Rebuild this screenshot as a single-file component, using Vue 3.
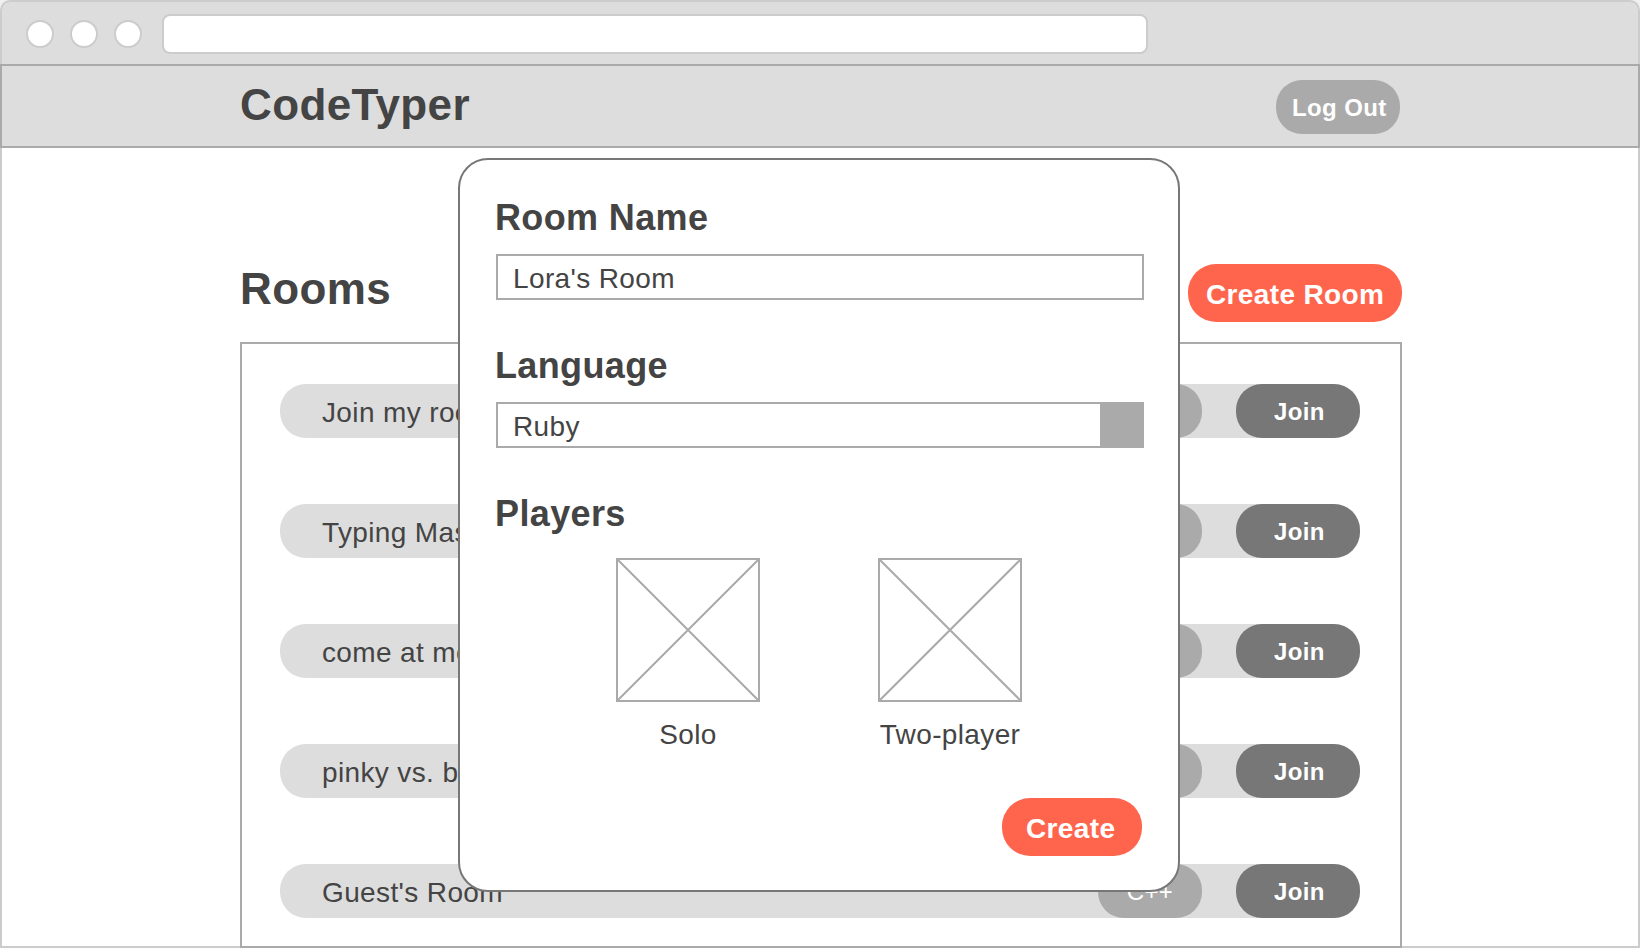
<script setup>
const rooms = [
  { name: 'Join my room', language: 'Ruby' },
  { name: 'Typing Master', language: 'Ruby' },
  { name: 'come at me', language: 'Java' },
  { name: 'pinky vs. brain', language: 'C++' },
  { name: "Guest's Room", language: 'C++' },
]
const modes = ['Solo', 'Two-player']
</script>

<template>
  <div class="window">
    <div class="chrome">
      <span v-for="n in 3" :key="n" class="dot"></span>
      <div class="address"></div>
    </div>

    <header class="header">
      <h1 class="title">CodeTyper</h1>
      <button class="pill logout">Log Out</button>
    </header>

    <main class="main">
      <div class="heading">
        <h2 class="title">Rooms</h2>
        <button class="action create-room">Create Room</button>
      </div>
      <ul class="rooms">
        <li v-for="room in rooms" :key="room.name" class="room">
          <span class="room-name">{{ room.name }}</span>
          <span class="pill language">{{ room.language }}</span>
          <button class="pill join">Join</button>
        </li>
      </ul>
    </main>

    <section class="modal">
      <h3 class="label">Room Name</h3>
      <div class="field">Lora's Room</div>
      <h3 class="label">Language</h3>
      <div class="field select">
        <span>Ruby</span>
        <span class="toggle"></span>
      </div>
      <h3 class="label">Players</h3>
      <div class="modes">
        <div v-for="mode in modes" :key="mode" class="mode">
          <svg class="thumb" width="144" height="144" viewBox="0 0 144 144">
            <rect x="1" y="1" width="142" height="142" />
            <path d="M1 1 143 143M143 1 1 143" />
          </svg>
          <span class="mode-name">{{ mode }}</span>
        </div>
      </div>
      <button class="action create">Create</button>
    </section>
  </div>
</template>

<style>
body {
  margin: 0;
  background: #f0f0f0;
}
</style>

<style scoped>
.window {
  position: relative;
  box-sizing: border-box;
  width: 1640px;
  height: 948px;
  overflow: hidden;
  display: flex;
  flex-direction: column;
  color: #444;
  font-family: "Liberation Sans", Arial, sans-serif;
  font-size: 28px;
  line-height: 31px;
  letter-spacing: 0.37px;
  white-space: nowrap;
}
.window * {
  box-sizing: border-box;
}
h1, h2, h3, ul {
  margin: 0;
  padding: 0;
}
button {
  border: 0;
  font-family: inherit;
  letter-spacing: inherit;
  color: #fff;
  font-weight: bold;
  text-align: left;
}
.chrome {
  flex: none;
  height: 64px;
  display: flex;
  align-items: flex-start;
  padding: 12px 24px 0;
  border: 2px solid #ccc;
  border-bottom: 0;
  border-radius: 10px 10px 0 0;
  background: #ddd;
}
.dot {
  width: 28px;
  height: 28px;
  margin: 6px 16px 0 0;
  border: 2px solid #ccc;
  border-radius: 50%;
  background: #fff;
}
.address {
  width: 986px;
  height: 40px;
  margin-left: 4px;
  border: 2px solid #ccc;
  border-radius: 8px;
  background: #fff;
}
.header {
  flex: none;
  height: 84px;
  display: flex;
  justify-content: space-between;
  align-items: flex-start;
  padding: 14px 238px 0 238px;
  border: 2px solid #aaa;
  background: #ddd;
}
.title {
  font-size: 44px;
  line-height: 49px;
}
.pill {
  flex: none;
  height: 54px;
  padding-top: 14px;
  padding-bottom: 13px;
  border-radius: 26px;
  font-size: 24px;
  line-height: 27px;
  color: #fff;
}
.logout {
  width: 124px;
  padding-left: 16px;
  padding-right: 0;
  background: #aaa;
}
.main {
  flex: 1;
  padding: 116px 236px 0 238px;
  border: 2px solid #ccc;
  border-top: 0;
  border-bottom: 0;
  background: linear-gradient(#ccc, #ccc) bottom / 100% 2px no-repeat #fff;
}
.heading {
  display: flex;
  justify-content: space-between;
  height: 78px;
}
.action {
  height: 58px;
  border-radius: 28px;
  padding-top: 15px;
  padding-bottom: 12px;
  padding-right: 0;
  font-size: 28px;
  line-height: 31px;
  background: #ff654d;
}
.create-room {
  width: 214px;
  padding-left: 18px;
}
.rooms {
  list-style: none;
  height: 606px;
  padding: 40px 40px 0 38px;
  border: 2px solid #aaa;
  display: flex;
  flex-direction: column;
  gap: 66px;
}
.room {
  height: 54px;
  flex: none;
  display: flex;
  border-radius: 26px;
  background: #ddd;
}
.room-name {
  flex: 1;
  padding: 13px 0 0 42px;
}
.language {
  width: 104px;
  margin-right: 34px;
  text-align: center;
  background: #aaa;
}
.join {
  width: 124px;
  padding-left: 38px;
  padding-right: 0;
  background: #777;
}
.modal {
  position: absolute;
  left: 458px;
  top: 158px;
  width: 722px;
  height: 734px;
  display: flex;
  flex-direction: column;
  padding: 37px 34px 0 36px;
  border: 2px solid #777;
  border-radius: 30px;
  background: #fff;
}
.label {
  margin: 0 0 16px -1px;
  font-size: 36px;
  line-height: 41px;
}
.field {
  height: 46px;
  margin-bottom: 45px;
  padding: 7px 0 0 15px;
  border: 2px solid #aaa;
}
.select {
  display: flex;
  justify-content: space-between;
}
.toggle {
  width: 42px;
  height: 42px;
  margin-top: -7px;
  background: #aaa;
}
.modes {
  display: flex;
  gap: 118px;
  margin: 8px 0 48px 120px;
}
.mode {
  width: 144px;
  display: flex;
  flex-direction: column;
  align-items: center;
}
.thumb {
  display: block;
  margin-bottom: 17px;
  fill: none;
  stroke: #aaa;
  stroke-width: 2;
}
.create {
  align-self: flex-end;
  width: 140px;
  margin-right: 2px;
  padding-left: 24px;
}
</style>
